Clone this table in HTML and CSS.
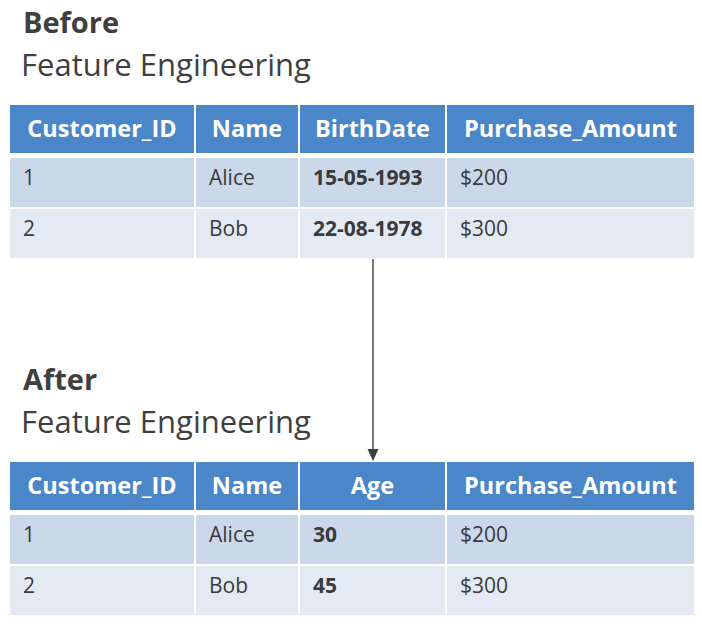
FILE: index.html
```html
<!DOCTYPE html>
<html lang="en">
<head>
<meta charset="utf-8">
<title>Feature Engineering</title>
<link rel="stylesheet" href="styles.css">
</head>
<body>
<main class="page">
  <section class="block block-before">
    <h1 class="title"><span class="label">Before</span><span class="sub">Feature Engineering</span></h1>
    <div class="grid">
      <div class="th">Customer_ID</div><div class="th">Name</div><div class="th">BirthDate</div><div class="th">Purchase_Amount</div>
      <div class="td odd">1</div><div class="td odd">Alice</div><div class="td odd strong">15-05-1993</div><div class="td odd">$200</div>
      <div class="td even">2</div><div class="td even">Bob</div><div class="td even strong">22-08-1978</div><div class="td even">$300</div>
    </div>
  </section>
  <section class="block block-after">
    <h1 class="title"><span class="label">After</span><span class="sub">Feature Engineering</span></h1>
    <div class="grid">
      <div class="th">Customer_ID</div><div class="th">Name</div><div class="th">Age</div><div class="th">Purchase_Amount</div>
      <div class="td odd">1</div><div class="td odd">Alice</div><div class="td odd strong">30</div><div class="td odd">$200</div>
      <div class="td even">2</div><div class="td even">Bob</div><div class="td even strong">45</div><div class="td even">$300</div>
    </div>
  </section>
  <svg class="arrow" width="12" height="203" viewBox="0 0 12 203" aria-hidden="true">
    <line x1="6" y1="0" x2="6" y2="192" stroke="#3f3f3f" stroke-width="1.4"/>
    <polygon points="0.5,190 11.5,190 6,202" fill="#3f3f3f"/>
  </svg>
</main>
</body>
</html>
```
FILE: styles.css
```css
html, body {
  margin: 0;
  padding: 0;
  background: #ffffff;
}

.page {
  position: relative;
  width: 702px;
  height: 625px;
  font-family: "Open Sans", "Noto Sans", "Liberation Sans", sans-serif;
  color: #3f3f3f;
}

.block {
  padding-left: 10px;
}

.block-before {
  padding-top: 2px;
}

.block-after {
  margin-top: 101px;
}

.title {
  margin: 0;
  padding-left: 11px;
  display: flex;
  flex-direction: column;
  font-weight: normal;
}

.label {
  font-size: 29px;
  font-weight: 700;
  line-height: 40px;
  padding-left: 2px;
}

.sub {
  font-size: 31px;
  font-weight: 400;
  line-height: 44px;
}

.grid {
  margin-top: 19px;
  width: 684px;
  display: grid;
  grid-template-columns: 184px 102px 145px 247px;
  column-gap: 2px;
  row-gap: 2px;
}

.th {
  background: #4a86c8;
  color: #ffffff;
  font-weight: 700;
  font-size: 23.5px;
  height: 48px;
  line-height: 46px;
  text-align: center;
  white-space: nowrap;
  margin-bottom: 3px;
}

.td {
  font-size: 21px;
  line-height: 29px;
  height: 49px;
  box-sizing: border-box;
  padding: 5px 12px 0 13px;
  color: #3a3a3a;
  white-space: nowrap;
}

.td.odd {
  background: #cbd8ea;
}

.td.even {
  background: #e4eaf3;
}

.td.strong {
  font-weight: 700;
}

.arrow {
  position: absolute;
  left: 367px;
  top: 259px;
}
```
